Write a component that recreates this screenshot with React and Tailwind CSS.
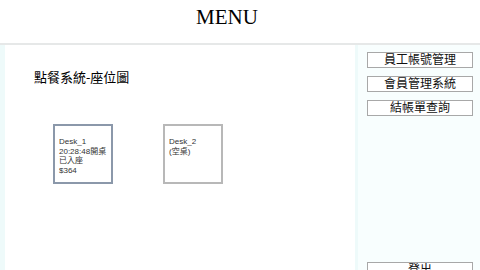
import React from 'react';

const serif = { fontFamily: '"Liberation Serif", "Noto Sans CJK TC", serif' };
const sans = { fontFamily: '"Liberation Sans", "Noto Sans CJK TC", sans-serif' };

const desks = [
  { name: 'Desk_1', lines: ['20:28:48開桌', '已入座', '$364'], busy: true },
  { name: 'Desk_2', lines: ['(空桌)'], busy: false }
];

const menuItems = ['員工帳號管理', '會員管理系統', '結帳單查詢'];

function DeskCard({ desk }) {
  return (
    <div
      className={`h-[60px] w-[60px] border-2 bg-white pl-[4px] pt-[11px] text-[8px] leading-[9.5px] text-[#333] ${
        desk.busy ? 'border-[#8b98aa]' : 'border-[#b8b8b8]'
      }`}
      style={sans}
    >
      <div>{desk.name}</div>
      {desk.lines.map((line) => (
        <div key={line}>{line}</div>
      ))}
    </div>
  );
}

function SideButton({ label, className = '' }) {
  return (
    <button
      className={`h-[16px] w-[106px] border border-[#a8a8a8] bg-white text-[12px] leading-[14px] text-[#111] ${className}`}
      style={serif}
    >
      {label}
    </button>
  );
}

export default function App() {
  return (
    <div className="h-[270px] w-[480px] overflow-hidden bg-white">
      <header className="flex h-[45px] items-center justify-center border-b-2 border-[#e6e8e8] pb-[8px] pr-[26px]">
        <h1 className="text-[21px] text-black" style={serif}>MENU</h1>
      </header>

      <div className="flex h-[241px] bg-[#eefafa]">
        <main className="ml-[5px] w-[350px] bg-white pl-[29px] pt-[26px]">
          <h2 className="text-[13px] font-normal leading-[14px] text-black" style={serif}>
            點餐系統-座位圖
          </h2>
          <div className="mt-[39px] flex gap-[50px] pl-[19px]">
            {desks.map((desk) => (
              <DeskCard key={desk.name} desk={desk} />
            ))}
          </div>
        </main>

        <aside className="ml-[3px] flex flex-1 flex-col gap-[8px] bg-[#f8fefe] pl-[9px] pt-[7px]">
          {menuItems.map((item) => (
            <SideButton key={item} label={item} />
          ))}
          <SideButton label="登出" className="mb-[8px] mt-auto" />
        </aside>
      </div>
    </div>
  );
}
